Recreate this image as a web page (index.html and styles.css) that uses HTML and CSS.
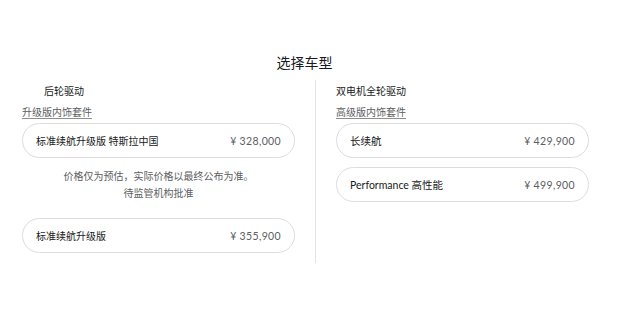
FILE: index.html
```html
<!DOCTYPE html>
<html lang="zh-CN">
<head>
<meta charset="utf-8">
<title>选择车型</title>
<link rel="stylesheet" href="styles.css">
</head>
<body>
<main class="page">
  <h1 class="title">选择车型</h1>
  <div class="columns">
    <section class="col col-left">
      <h2 class="group-title indent">后轮驱动</h2>
      <a class="pack-link" href="#">升级版内饰套件</a>
      <div class="card card-first">
        <span class="name">标准续航升级版 特斯拉中国</span>
        <span class="price">¥ 328,000</span>
      </div>
      <p class="note">价格仅为预估，实际价格以最终公布为准。<br>待监管机构批准</p>
      <div class="card card-second">
        <span class="name">标准续航升级版</span>
        <span class="price">¥ 355,900</span>
      </div>
    </section>
    <div class="divider"></div>
    <section class="col col-right">
      <h2 class="group-title">双电机全轮驱动</h2>
      <a class="pack-link" href="#">高级版内饰套件</a>
      <div class="card card-first">
        <span class="name">长续航</span>
        <span class="price">¥ 429,900</span>
      </div>
      <div class="card card-stack">
        <span class="name">Performance 高性能</span>
        <span class="price">¥ 499,900</span>
      </div>
    </section>
  </div>
</main>
</body>
</html>
```

FILE: styles.css
```css
* { box-sizing: border-box; }
html, body { margin: 0; padding: 0; background: #ffffff; }
body {
  font-family: "Lato", "Noto Sans CJK SC", sans-serif;
  color: #171a20;
}
.page {
  width: 620px;
  height: 319px;
  padding-top: 53px;
}
.title {
  margin: 0;
  font-size: 14px;
  line-height: 20px;
  font-weight: 400;
  text-align: center;
  padding-right: 11px;
}
.columns {
  display: flex;
  margin-top: 7px;
}
.col {
  display: flex;
  flex-direction: column;
  align-items: flex-start;
  padding-top: 3px;
  padding-bottom: 10px;
}
.col-left {
  width: 315px;
  padding-left: 22px;
  padding-right: 20px;
}
.col-right {
  flex: 1;
  padding-left: 20px;
  padding-right: 31px;
}
.divider {
  width: 1px;
  background: #e3e3e3;
}
.group-title {
  margin: 0;
  font-size: 10px;
  line-height: 16px;
  font-weight: 400;
  color: #171a20;
}
.indent { margin-left: 22px; }
.pack-link {
  margin-top: 5px;
  font-size: 10px;
  line-height: 16px;
  color: #5c5e62;
  text-decoration: underline;
  text-decoration-color: #8e8e8e;
  text-underline-offset: 2px;
}
.card {
  align-self: stretch;
  height: 35px;
  border: 1px solid #dddddd;
  border-radius: 18px;
  display: flex;
  align-items: center;
  justify-content: space-between;
  padding: 0 13px 0 13px;
}
.card-first { margin-top: 3px; }
.card-second { margin-top: 16px; }
.card-stack { margin-top: 9px; }
.name {
  font-size: 10px;
  font-weight: 400;
  color: #171a20;
}
.col-right .name { font-size: 10.5px; }
.price {
  font-size: 10.5px;
  color: #5c5e62;
  letter-spacing: 0.35px;
}
.note {
  align-self: stretch;
  margin: 10px 0 0 0;
  font-size: 10px;
  line-height: 17px;
  color: #5c5e62;
  text-align: center;
}
```
